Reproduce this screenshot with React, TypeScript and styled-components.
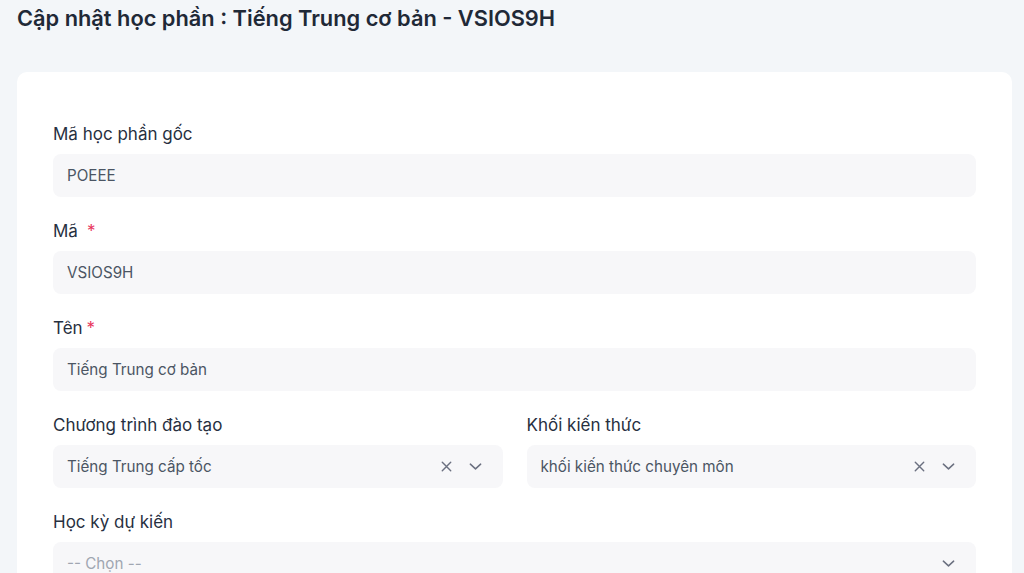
import styled, { createGlobalStyle } from "styled-components";

const GlobalStyle = createGlobalStyle`
    html, body {
        margin: 0;
        padding: 0;
        background: #f3f6f9;
        font-family: Inter, "Noto Sans", sans-serif;
    }
    * { box-sizing: border-box; }
`;

const Page = styled.div`
    padding: 4px 12px 0 17px;
    height: 573px;
    overflow: hidden;
`;

const Title = styled.h1`
    margin: 0;
    font-size: 21.8px;
    line-height: 28px;
    font-weight: 600;
    color: #1f2937;
`;

const Card = styled.div`
    margin-top: 40px;
    background: #ffffff;
    border-radius: 10px;
    padding: 50px 36px 36px;
    display: flex;
    flex-direction: column;
    gap: 22px;
`;

const Row = styled.div`
    display: grid;
    grid-template-columns: 1fr 1fr;
    column-gap: 24px;
`;

const Field = styled.div`
    display: flex;
    flex-direction: column;
    gap: 7px;
`;

const Label = styled.label`
    font-size: 17px;
    line-height: 25px;
    color: #27303f;
`;

const Required = styled.span<{ $space?: boolean }>`
    color: #e8365d;
    margin-left: ${(p) => (p.$space ? "9px" : "4px")};
`;

const Box = styled.div`
    height: 43px;
    background: #f7f7f9;
    border-radius: 8px;
    display: flex;
    align-items: center;
    padding: 0 20px 0 14px;
    font-size: 15.2px;
    color: #4b5563;
`;

const Value = styled.span<{ $placeholder?: boolean }>`
    flex: 1;
    color: ${(p) => (p.$placeholder ? "#a0a6b1" : "#4b5563")};
`;

const Icons = styled.div`
    display: flex;
    align-items: center;
    gap: 14px;
    color: #6b7080;
`;

const XIcon = () => (
    <svg width="15" height="15" viewBox="0 0 16 16" fill="none" stroke="currentColor" strokeWidth="1.5" strokeLinecap="round">
        <path d="M3.5 3.5l9 9M12.5 3.5l-9 9" />
    </svg>
);

const Chevron = () => (
    <svg width="15" height="15" viewBox="0 0 16 16" fill="none" stroke="currentColor" strokeWidth="1.6" strokeLinecap="round" strokeLinejoin="round">
        <path d="M2.5 5.5L8 10.5l5.5-5" />
    </svg>
);

const TextField = ({ label, value, req, space }: { label: string; value: string; req?: boolean; space?: boolean }) => (
    <Field>
        <Label>
            {label}
            {req && <Required $space={space}>*</Required>}
        </Label>
        <Box>
            <Value>{value}</Value>
        </Box>
    </Field>
);

const SelectField = ({ label, value, clearable, placeholder }: { label: string; value: string; clearable?: boolean; placeholder?: boolean }) => (
    <Field>
        <Label>{label}</Label>
        <Box>
            <Value $placeholder={placeholder}>{value}</Value>
            <Icons>
                {clearable && <XIcon />}
                <Chevron />
            </Icons>
        </Box>
    </Field>
);

export default function App() {
    return (
        <>
            <GlobalStyle />
            <Page>
                <Title>Cập nhật học phần : Tiếng Trung cơ bản - VSIOS9H</Title>
                <Card>
                    <TextField label="Mã học phần gốc" value="POEEE" />
                    <TextField label="Mã" value="VSIOS9H" req space />
                    <TextField label="Tên" value="Tiếng Trung cơ bản" req />
                    <Row>
                        <SelectField label="Chương trình đào tạo" value="Tiếng Trung cấp tốc" clearable />
                        <SelectField label="Khối kiến thức" value="khối kiến thức chuyên môn" clearable />
                    </Row>
                    <SelectField label="Học kỳ dự kiến" value="-- Chọn --" placeholder />
                </Card>
            </Page>
        </>
    );
}
